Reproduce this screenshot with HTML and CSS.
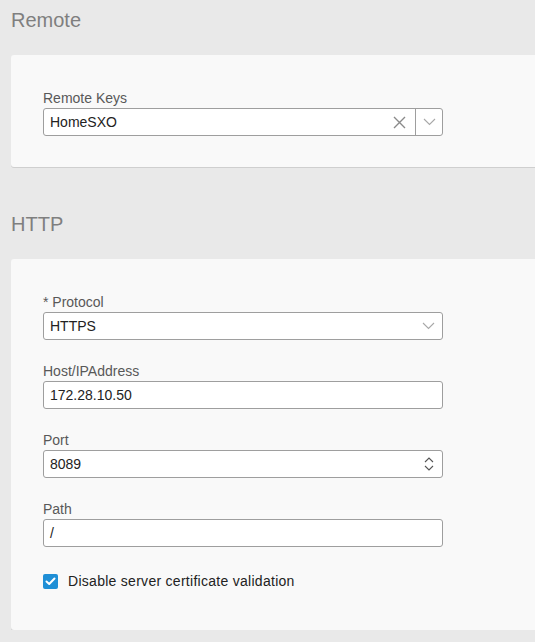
FILE: index.html
```html
<!DOCTYPE html>
<html>
<head>
<meta charset="utf-8">
<link rel="stylesheet" href="styles.css">
</head>
<body>
<div class="page">
  <h2 class="section-title">Remote</h2>
  <div class="card card-remote">
    <div class="field">
      <div class="label">Remote Keys</div>
      <div class="combo">
        <div class="combo-value">HomeSXO</div>
        <div class="combo-clear">
          <svg width="13" height="13" viewBox="0 0 13 13"><path d="M1 1L12 12M12 1L1 12" stroke="#8a8a8a" stroke-width="1.4" fill="none"/></svg>
        </div>
        <div class="combo-toggle">
          <svg width="13" height="8" viewBox="0 0 13 8"><path d="M1 1L6.5 6.5L12 1" stroke="#a8a8a8" stroke-width="1.1" fill="none"/></svg>
        </div>
      </div>
    </div>
  </div>

  <h2 class="section-title http-title">HTTP</h2>
  <div class="card card-http">
    <div class="field">
      <div class="label">* Protocol</div>
      <div class="input select">
        <span class="value">HTTPS</span>
        <svg class="chev" width="13" height="8" viewBox="0 0 13 8"><path d="M1 1L6.5 6.5L12 1" stroke="#a8a8a8" stroke-width="1.1" fill="none"/></svg>
      </div>
    </div>
    <div class="field">
      <div class="label">Host/IPAddress</div>
      <div class="input"><span class="value">172.28.10.50</span></div>
    </div>
    <div class="field">
      <div class="label">Port</div>
      <div class="input select">
        <span class="value">8089</span>
        <svg class="spin" width="10" height="14" viewBox="0 0 10 14"><path d="M1 5L5 1L9 5M1 9L5 13L9 9" stroke="#555" stroke-width="1.1" fill="none"/></svg>
      </div>
    </div>
    <div class="field">
      <div class="label">Path</div>
      <div class="input"><span class="value">/</span></div>
    </div>
    <div class="check-row">
      <span class="checkbox">
        <svg width="11" height="9" viewBox="0 0 11 9"><path d="M1.5 4.5L4.2 7L9.5 1.5" stroke="#fff" stroke-width="2" fill="none" stroke-linecap="round" stroke-linejoin="round"/></svg>
      </span>
      <span class="check-label">Disable server certificate validation</span>
    </div>
  </div>
</div>
</body>
</html>
```

FILE: styles.css
```css
html, body {
  margin: 0;
  padding: 0;
  background: #e9e9e9;
  overflow: hidden;
}
body {
  font-family: "Liberation Sans", Arial, sans-serif;
  color: #222;
}
.page {
  padding: 8px 0 0 11px;
}
.section-title {
  margin: 0;
  font-size: 20px;
  line-height: 24px;
  font-weight: normal;
  color: #7f7f7f;
}
.http-title {
  margin-top: 45px;
}
.card {
  background: #f9f9f9;
  border-radius: 3px 0 0 3px;
  box-shadow: 0 1px 0 #cfcfcf;
  padding: 32px 0 32px 32px;
}
.card-remote {
  margin-top: 23px;
  padding-top: 33px;
  padding-bottom: 31px;
}
.card-http {
  margin-top: 23px;
  padding-top: 33px;
  padding-bottom: 39px;
}
.field {
  width: 400px;
  margin-bottom: 21px;
}
.card-remote .field {
  margin-bottom: 0;
}
.label {
  font-size: 14px;
  line-height: 20px;
  color: #585858;
}
.input, .combo {
  box-sizing: border-box;
  height: 28px;
  width: 400px;
  background: #fff;
  border: 1px solid #9e9e9e;
  border-radius: 3px;
  display: flex;
  align-items: center;
  font-size: 14px;
  color: #222;
}
.value {
  padding-left: 6px;
  flex: 1;
}
.chev {
  margin-right: 7px;
}
.spin {
  margin-right: 8px;
}
.combo-value {
  flex: 1;
  padding-left: 6px;
}
.combo-clear {
  width: 28px;
  display: flex;
  justify-content: center;
  margin-right: 2px;
}
.combo-toggle {
  align-self: stretch;
  width: 26px;
  border-left: 1px solid #9e9e9e;
  display: flex;
  align-items: center;
  justify-content: center;
}
.check-row {
  margin-top: 24px;
  display: flex;
  align-items: center;
  height: 20px;
  font-size: 14px;
  color: #222;
}
.checkbox {
  width: 15px;
  height: 15px;
  border-radius: 2px;
  background: #1f8fd6;
  display: flex;
  align-items: center;
  justify-content: center;
  margin-right: 10px;
}
.check-label {
  line-height: 20px;
  letter-spacing: 0.28px;
}
```
